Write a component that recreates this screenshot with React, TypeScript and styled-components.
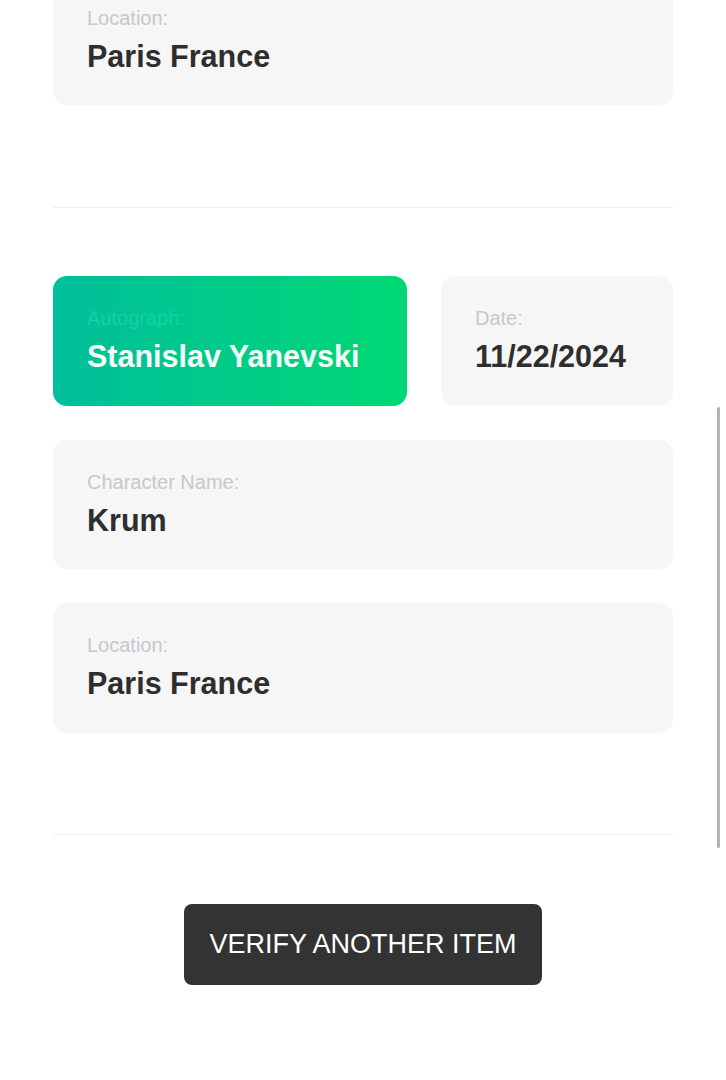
import React from "react";
import styled, { createGlobalStyle } from "styled-components";

const GlobalStyle = createGlobalStyle`
  html, body {
    margin: 0;
    padding: 0;
    background: #ffffff;
    overflow: hidden;
  }
  body {
    font-family: "Liberation Sans", Arial, Helvetica, sans-serif;
    -webkit-font-smoothing: antialiased;
  }
`;

const Page = styled.main`
  width: 620px;
  margin: -24.5px auto 0;
  display: flex;
  flex-direction: column;
  padding-bottom: 95px;
`;

const Section = styled.section`
  display: grid;
  grid-template-columns: 354px 232px;
  column-gap: 34px;
  row-gap: 34px;
`;

const Card = styled.div<{ $accent?: boolean; $full?: boolean }>`
  grid-column: ${(p) => (p.$full ? "1 / -1" : "auto")};
  background: ${(p) =>
    p.$accent ? "linear-gradient(90deg, #00bf9b 0%, #00d874 100%)" : "#f6f6f6"};
  border-radius: 14px;
  padding: 31px 34px 31.5px;
  display: flex;
  flex-direction: column;
  gap: 9px;
`;

const Label = styled.span<{ $accent?: boolean }>`
  font-size: 20px;
  line-height: 23px;
  color: ${(p) => (p.$accent ? "#15d0aa" : "#c5c8cc")};
`;

const Value = styled.span<{ $accent?: boolean }>`
  font-size: 30.5px;
  line-height: 35px;
  font-weight: 700;
  color: ${(p) => (p.$accent ? "#f4fffb" : "#2e2e2e")};
`;

const Divider = styled.hr<{ $after?: number }>`
  border: 0;
  height: 1px;
  background: #efefef;
  margin: 101.5px 0 ${(p) => p.$after ?? 68}px;
  width: 100%;
`;

const ButtonRow = styled.div`
  display: flex;
  justify-content: center;
`;

const Button = styled.button`
  background: #333333;
  color: #ffffff;
  border: 0;
  border-radius: 8px;
  height: 81px;
  padding: 0 25px;
  font-family: "Liberation Sans", Arial, Helvetica, sans-serif;
  font-size: 27px;
  text-transform: uppercase;
  cursor: pointer;
`;

const ScrollThumb = styled.div`
  position: fixed;
  right: 6px;
  top: 407px;
  width: 3px;
  height: 441px;
  border-radius: 2px;
  background: #b3b3b3;
`;

type Field = { label: string; value: string; accent?: boolean; full?: boolean };

const InfoCard = ({ label, value, accent, full }: Field) => (
  <Card $accent={accent} $full={full}>
    <Label $accent={accent}>{label}</Label>
    <Value $accent={accent}>{value}</Value>
  </Card>
);

export default function App() {
  return (
    <>
      <GlobalStyle />
      <Page>
        <Section>
          <InfoCard label="Location:" value="Paris France" full />
        </Section>
        <Divider $after={68.5} />
        <Section>
          <InfoCard label="Autograph:" value="Stanislav Yanevski" accent />
          <InfoCard label="Date:" value="11/22/2024" />
          <InfoCard label="Character Name:" value="Krum" full />
          <InfoCard label="Location:" value="Paris France" full />
        </Section>
        <Divider $after={69} />
        <ButtonRow>
          <Button>Verify another item</Button>
        </ButtonRow>
      </Page>
      <ScrollThumb />
    </>
  );
}
